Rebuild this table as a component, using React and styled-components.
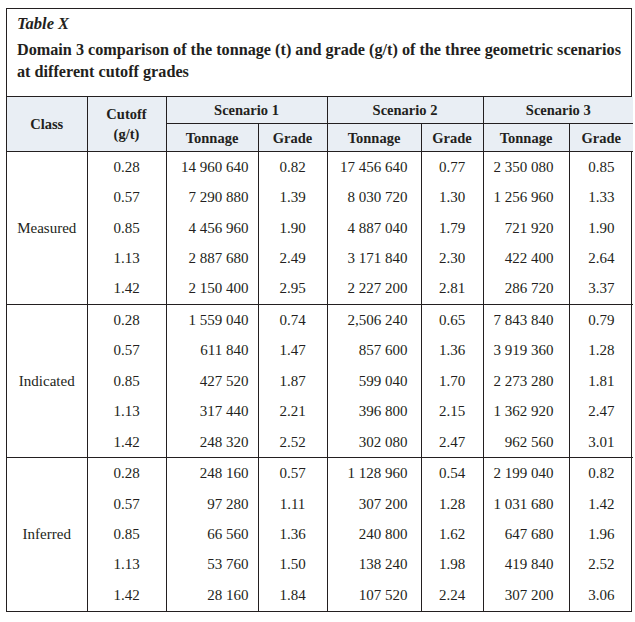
import styled, { createGlobalStyle } from "styled-components";

const GlobalStyle = createGlobalStyle`
  body {
    margin: 0;
    background: #ffffff;
    font-family: "Liberation Serif", "Times New Roman", serif;
    color: #231f20;
  }
`;

const Frame = styled.div`
  margin: 8px 0 0 6px;
  width: 626px;
  border: 1px solid #231f20;
  box-sizing: border-box;
`;

const Caption = styled.div`
  height: 88px;
  padding: 4px 2px 0 10px;
  box-sizing: border-box;
  border-bottom: 1px solid #231f20;
`;

const Label = styled.div`
  font-style: italic;
  font-weight: bold;
  font-size: 16.5px;
  line-height: 22px;
`;

const Title = styled.div`
  font-weight: bold;
  font-size: 16.2px;
  line-height: 22px;
  margin-top: 4px;
`;

const Table = styled.table`
  width: 100%;
  border-collapse: collapse;
  table-layout: fixed;
  font-size: 15px;
`;

const Head = styled.th`
  background: #e9eef4;
  font-weight: bold;
  font-size: 14.5px;
  text-align: center;
  vertical-align: middle;
  height: ${(p) => p.h || 26}px;
  padding: 0;
  border: 1px solid #231f20;
  border-top: ${(p) => (p.top ? "none" : "1px solid #231f20")};
  line-height: 20px;
  &:first-child { border-left: none; }
  &:last-child { border-right: none; }
`;

const Cell = styled.td`
  text-align: ${(p) => (p.pad ? "right" : "center")};
  padding: 0 ${(p) => p.pad || 0}px 0 0;
  height: 30.45px;
  vertical-align: middle;
  border-left: 1px solid #231f20;
  border-right: 1px solid #231f20;
  border-top: ${(p) => (p.first ? "1px solid #231f20" : "none")};
  white-space: nowrap;
  &:last-child { border-right: none; }
`;

const ClassCell = styled(Cell)`
  border-left: none;
`;

const cutoffs = ["0.28", "0.57", "0.85", "1.13", "1.42"];

const groups = [
  {
    name: "Measured",
    rows: [
      ["14 960 640", "0.82", "17 456 640", "0.77", "2 350 080", "0.85"],
      ["7 290 880", "1.39", "8 030 720", "1.30", "1 256 960", "1.33"],
      ["4 456 960", "1.90", "4 887 040", "1.79", "721 920", "1.90"],
      ["2 887 680", "2.49", "3 171 840", "2.30", "422 400", "2.64"],
      ["2 150 400", "2.95", "2 227 200", "2.81", "286 720", "3.37"],
    ],
  },
  {
    name: "Indicated",
    rows: [
      ["1 559 040", "0.74", "2,506 240", "0.65", "7 843 840", "0.79"],
      ["611 840", "1.47", "857 600", "1.36", "3 919 360", "1.28"],
      ["427 520", "1.87", "599 040", "1.70", "2 273 280", "1.81"],
      ["317 440", "2.21", "396 800", "2.15", "1 362 920", "2.47"],
      ["248 320", "2.52", "302 080", "2.47", "962 560", "3.01"],
    ],
  },
  {
    name: "Inferred",
    rows: [
      ["248 160", "0.57", "1 128 960", "0.54", "2 199 040", "0.82"],
      ["97 280", "1.11", "307 200", "1.28", "1 031 680", "1.42"],
      ["66 560", "1.36", "240 800", "1.62", "647 680", "1.96"],
      ["53 760", "1.50", "138 240", "1.98", "419 840", "2.52"],
      ["28 160", "1.84", "107 520", "2.24", "307 200", "3.06"],
    ],
  },
];

const widths = [80, 79, 92, 69, 94, 62, 86, 64];
// right padding of the tonnage columns, per scenario
const tonnagePad = [9, 13, 15];

export default function App() {
  return (
    <>
      <GlobalStyle />
      <Frame>
        <Caption>
          <Label>Table X</Label>
          <Title>
            Domain 3 comparison of the tonnage (t) and grade (g/t) of the three geometric scenarios
            at different cutoff grades
          </Title>
        </Caption>
        <Table>
          <colgroup>
            {widths.map((w, i) => (
              <col key={i} style={{ width: w }} />
            ))}
          </colgroup>
          <thead>
            <tr>
              <Head rowSpan={2} top>Class</Head>
              <Head rowSpan={2} top>
                Cutoff
                <br />
                (g/t)
              </Head>
              <Head colSpan={2} top>Scenario 1</Head>
              <Head colSpan={2} top>Scenario 2</Head>
              <Head colSpan={2} top>Scenario 3</Head>
            </tr>
            <tr>
              <Head h={27}>Tonnage</Head>
              <Head h={27}>Grade</Head>
              <Head h={27}>Tonnage</Head>
              <Head h={27}>Grade</Head>
              <Head h={27}>Tonnage</Head>
              <Head h={27}>Grade</Head>
            </tr>
          </thead>
          <tbody>
            {groups.map((g) =>
              g.rows.map((r, i) => (
                <tr key={g.name + i}>
                  {i === 0 && (
                    <ClassCell rowSpan={5} first>
                      {g.name}
                    </ClassCell>
                  )}
                  <Cell first={i === 0}>{cutoffs[i]}</Cell>
                  {r.map((v, j) => (
                    <Cell key={j} first={i === 0} pad={j % 2 === 0 ? tonnagePad[j / 2] : 0}>
                      {v}
                    </Cell>
                  ))}
                </tr>
              ))
            )}
          </tbody>
        </Table>
      </Frame>
    </>
  );
}
